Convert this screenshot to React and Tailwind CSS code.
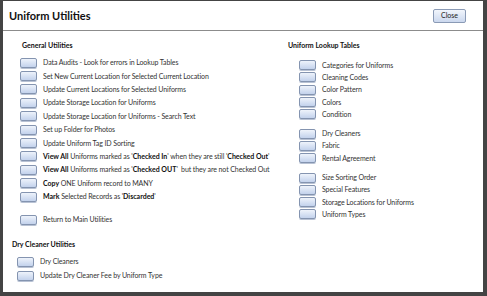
const general = [
  [['Data Audits - Look for errors in Lookup Tables']],
  [['Set New Current Location for Selected Current Location']],
  [['Update Current Locations for Selected Uniforms']],
  [['Update Storage Location for Uniforms']],
  [['Update Storage Location for Uniforms - Search Text']],
  [['Set up Folder for Photos']],
  [['Update Uniform Tag ID Sorting']],
  [['View All', 1], [' Uniforms marked as \''], ['Checked In', 1], ['\' when they are still \''], ['Checked Out', 1], ['\'']],
  [['View All', 1], [' Uniforms marked as \''], ['Checked OUT', 1], ['\'  but they are not Checked Out']],
  [['Copy', 1], [' ONE Uniform record to MANY']],
  [['Mark', 1], [' Selected Records as \''], ['Discarded', 1], ['\'']],
]

const lookups = [
  ['Categories for Uniforms', 'Cleaning Codes', 'Color Pattern', 'Colors', 'Condition'],
  ['Dry Cleaners', 'Fabric', 'Rental Agreement'],
  ['Size Sorting Order', 'Special Features', 'Storage Locations for Uniforms', 'Uniform Types'],
]

function Btn() {
  return (
    <div className="w-[17px] h-[10px] shrink-0 rounded-[2px] border border-[#8494b0] bg-gradient-to-b from-[#eef3fb] to-[#c3d2ec] shadow-[0_1px_0_#b8c2d4]" />
  )
}

function Row({ parts, h = 'h-[13.4px]' }) {
  return (
    <div className={`flex items-center gap-[6px] ${h}`}>
      <Btn />
      <span className="whitespace-pre text-[#333]">
        {parts.map(([t, b], i) => (
          <span key={i} className={b ? 'font-bold text-[#111]' : 'tracking-[-0.1px]'}>{t}</span>
        ))}
      </span>
    </div>
  )
}

export default function App() {
  return (
    <div className="w-[487px] h-[296px] bg-white border-l-[3px] border-r-[4px] border-b-[4px] border-t border-[#444] flex flex-col text-[7px] leading-none" style={{ fontFamily: 'Lato, "Noto Sans", sans-serif' }}>
      <div className="h-[30px] shrink-0 flex items-center justify-between pl-[6px] pr-[17px] border-b border-[#8c8c8c]">
        <span className="text-[11px] font-bold text-[#111]">Uniform Utilities</span>
        <button className="w-[33px] h-[14px] rounded-[2px] border border-[#8a9ab5] bg-gradient-to-b from-[#f2f6fc] to-[#cbd8ee] text-[7px] text-[#222] flex items-center justify-center">Close</button>
      </div>
      <div className="flex pt-[10px]">
        <div className="w-[266px] pl-[17px]">
          <div className="font-bold text-[#111] pl-[2px] h-[9px] flex items-center">General Utilities</div>
          <div className="pt-[6px]">
            {general.map((p, i) => <Row key={i} parts={p} />)}
          </div>
          <div className="pt-[10px]">
            <Row parts={[['Return to Main Utilities']]} />
          </div>
        </div>
        <div className="pl-[19px]">
          <div className="font-bold text-[#111] h-[9px] flex items-center">Uniform Lookup Tables</div>
          <div className="pt-[9px] pl-[11px] flex flex-col gap-[7px]">
            {lookups.map((g, i) => (
              <div key={i}>
                {g.map(t => <Row key={t} parts={[[t]]} h="h-[12.3px]" />)}
              </div>
            ))}
          </div>
        </div>
      </div>
      <div className="pl-[9px] pt-[13px]">
        <div className="font-bold text-[#111] h-[9px] flex items-center">Dry Cleaner Utilities</div>
        <div className="pt-[6px] pl-[5px]">
          <Row parts={[['Dry Cleaners']]} h="h-[14px]" />
          <Row parts={[['Update Dry Cleaner Fee by Uniform Type']]} h="h-[14px]" />
        </div>
      </div>
    </div>
  )
}
